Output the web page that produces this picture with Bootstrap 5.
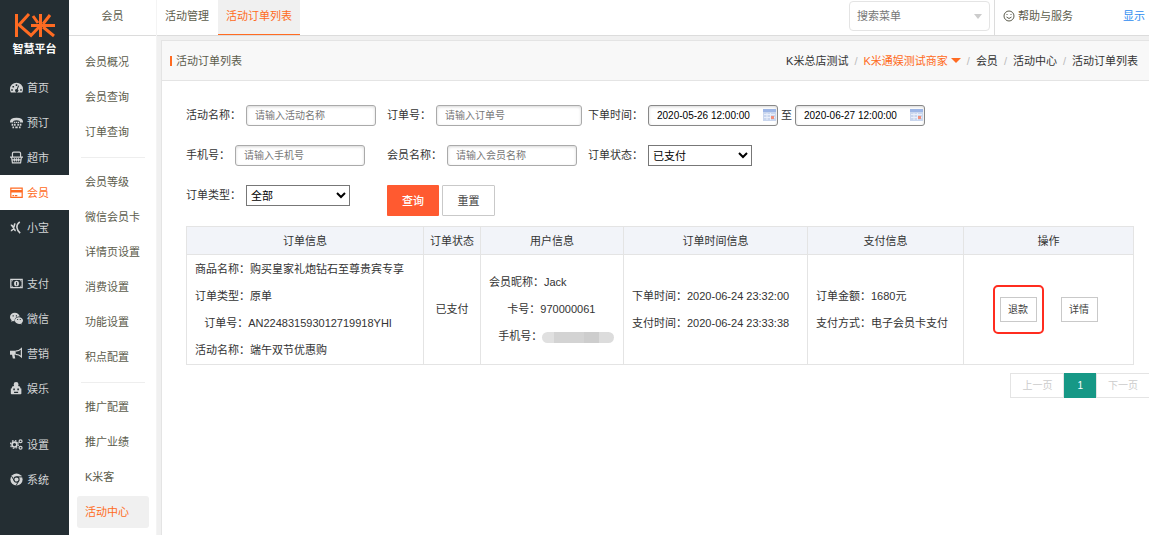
<!DOCTYPE html>
<html lang="zh-CN">
<head>
<meta charset="utf-8">
<meta name="viewport" content="width=device-width, initial-scale=1">
<title>活动订单列表</title>
<link href="https://cdn.jsdelivr.net/npm/bootstrap@5.3.0/dist/css/bootstrap.min.css" rel="stylesheet">
<style>
  :root { --brand: #ff6b22; --ink: #333; --olive: #5c5c4c; --line: #e4e4e4; }
  body { font: 11px/16px "Liberation Sans", "Noto Sans CJK SC", sans-serif; color: var(--ink); background: #f0f0f0; }
  a { text-decoration: none; color: inherit; }
  .shell { height: 100vh; overflow: hidden; }

  /* primary navigation */
  .rail { width: 69px; background: #242e33; color: #d3d5d6; }
  .brand { height: 70px; padding-top: 12px; gap: 3px; }
  .brand-name { font-weight: 700; font-size: 11px; line-height: 16px; color: #fff; }
  .rail a { height: 35px; padding-left: 10px; gap: 4px; }
  .rail a svg { width: 13px; height: 13px; flex: none; }
  .rail a.active { background: #fff; color: var(--brand); }
  .rail .gap-top { margin-top: 21px; }

  /* secondary navigation */
  .submenu { width: 88px; background: #fff; color: var(--olive); border-right: 1px solid #f4f4f4; }
  .bar { height: 36px; border-bottom: 1px solid #dcdcdc; background: #fff; }
  .bar-title { line-height: 32px; }
  .submenu ul { margin: 10px 7px 0 8px; }
  .submenu li a { display: block; height: 32px; line-height: 32px; margin-bottom: 3px; padding-left: 8px; border-radius: 3px; white-space: nowrap; }
  .submenu li a.active { background: #f0f0f0; color: var(--brand); }
  .submenu li.rule { border-top: 1px solid #eee; margin: 9px 4px 8px; }

  /* top bar */
  .tabs a { height: 35px; line-height: 32px; padding: 0 8px; color: var(--olive); }
  .tabs a + a { margin-left: 1px; }
  .tabs a.active { background: #f0f0f0; color: var(--brand); border-bottom: 1px solid var(--brand); }
  .menu-search { width: 141px; height: 30px; border: 1px solid #e4e4e4; border-radius: 4px; margin: 1px 4px 0 0; padding: 0 7px; }
  .menu-search input { width: 100%; border: 0; outline: 0; padding: 0; font-size: 11px; background: none; }
  .menu-search input::placeholder { color: #777; }
  .menu-search .caret { color: #ccc; }
  .caret { width: 0; height: 0; border: 4px solid transparent; border-bottom: 0; border-top: 5px solid currentColor; flex: none; }
  .help { border-left: 1px solid #dcdcdc; padding-left: 8px; height: 35px; padding-bottom: 3px; color: var(--olive); gap: 3px; }
  .show-link { color: #2d8cf0; margin: 0 5px 3px 50px; }

  /* panel */
  .panel { margin: 4px 0 0 4px; border: 1px solid var(--line); border-width: 1px 0 0 1px; background: #fff; }
  .panel-head { height: 40px; background: #f8f8f8; border-bottom: 1px solid var(--line); padding: 0 12px 0 8px; }
  .panel-head h1 { font-size: 11px; font-weight: 400; color: var(--olive); border-left: 2px solid var(--brand); padding-left: 4px; line-height: 10px; margin: 0; }
  .crumbs { gap: 6px; }
  .crumbs i { color: #bbb; font-style: normal; }
  .crumbs .current { color: var(--brand); gap: 3px; }
  .crumbs .caret { border-left-width: 5px; border-right-width: 5px; }
  .panel-body { padding: 24px 16px 0 24px; }

  /* filters */
  .filters { display: grid; grid-template-columns: 201px 201px 1fr; row-gap: 19px; }
  .field { display: flex; gap: 5px; height: 21px; }
  .field label { line-height: 21px; white-space: nowrap; }
  .field input, .field select { width: 130px; height: 21px; font-size: 10px; color: #000; background: #fff; }
  .field input { padding: 0 8px; border: 1px solid #aaa; border-radius: 3px; box-shadow: inset 0 1px 3px rgba(0,0,0,.16); }
  .field input::placeholder { color: #777; }
  .field .order-no { width: 146px; }
  .field select { width: 104px; font-size: 11px; border: 1px solid #777; border-radius: 0; }
  .range { display: flex; gap: 3px; }
  .date-box { position: relative; display: flex; }
  .date-box input { border-color: #888; }
  .date-box svg { position: absolute; right: 2px; top: 4px; }
  .acts { gap: 3px; }
  .act { height: 31px; width: 53px; border-radius: 1px; font-size: 11px; line-height: 16px; padding: 0; }
  .act-go, .act-go:hover { background: #ff5a30; color: #fff; font-weight: 500; width: 52px; }
  .act-reset { border: 1px solid #c9c9c9; background: #fff; color: #444; }

  /* orders */
  .orders { table-layout: fixed; width: 100%; margin-top: 10px; }
  .orders th, .orders td { border: 1px solid var(--line); }
  .orders th { height: 28px; background: #f2f4f9; font-weight: 400; text-align: center; }
  .orders td { padding: 0 8px; white-space: nowrap; line-height: 27px; height: 110px; }
  .mini { width: 37px; height: 25px; padding: 0; font-size: 10px; border: 1px solid #c9c9c9; border-radius: 0; background: #fff; color: #444; }
  .flagged { position: relative; line-height: 0; }
  .flagged::after { content: ""; position: absolute; inset: -12px -7px; border: 2px solid #ff2c1f; border-radius: 5px; pointer-events: none; }
  .masked { display: inline-block; width: 72px; height: 11px; border-radius: 6px; vertical-align: middle; background: linear-gradient(90deg, #e0e0e0 0 17%, #d3d3d3 17% 58%, #cdcdcd 58% 79%, #dcdcdc 79%); }

  .pager { margin: 8px -16px 0 0; font-size: 10px; }
  .pager a, .pager span { height: 25px; line-height: 23px; border: 1px solid var(--line); padding: 0 11px; color: #ccc; }
  .pager a { background: #169886; border-color: #169886; color: #fff; padding: 0 12px; }
</style>
</head>
<body>
<div class="shell d-flex">

  <nav class="rail flex-shrink-0">
    <div class="brand d-flex flex-column align-items-center">
      <svg width="42" height="26" viewBox="0 0 42 26" fill="none" stroke="#ff6b22" stroke-width="3" aria-label="K米">
        <path d="M2.500 2v23M15 2L5 13l12 10.500L26 14M17 13.500h24M26.500 2v23M19 4l5 7M36 3l-7 9M29 15l11 9"/>
      </svg>
      <div class="brand-name">智慧平台</div>
    </div>
    <a href="#" class="d-flex align-items-center"><svg viewBox="0 0 16 16" fill="currentColor"><path fill-rule="evenodd" d="M8 2a8 8 0 0 0-8 8q0 2 1 4h14q1-2 1-4a8 8 0 0 0-8-8zM7 4h2v2H7zM3 6h2v2H3zM1.500 10h2v2h-2zM12.500 10h2v2h-2zM10 5.500l1.200.4-1.700 4.300a2 2 0 1 1-1.200-.4z"/></svg>首页</a>
    <a href="#" class="d-flex align-items-center"><svg viewBox="0 0 16 16" fill="currentColor"><path d="M0 7q0-5 8-5t8 5v1h-4V6Q8 4.500 4 6v2H0zM5 7h1.500v1.500H5zM7.300 7h1.500v1.500H7.300zM9.600 7h1.500v1.500H9.600zM2 9.500h2V12H2zM5 9.500h2V12H5zM9 9.500h2V12H9zM12 9.500h2V12h-2zM3 13h2v2H3zM6.500 13h3v2h-3zM11 13h2v2h-2z"/></svg>预订</a>
    <a href="#" class="d-flex align-items-center"><svg viewBox="0 0 16 16" fill="none" stroke="currentColor" stroke-width="1.500"><path d="M3 7V3q0-1.500 1.500-1.500h7Q13 1.500 13 3v4M0 7.500h16M2 8l1 6.500h10L14 8M5.500 9v4M8 9v4M10.500 9v4M3 11h10"/></svg>超市</a>
    <a href="#" class="active d-flex align-items-center"><svg viewBox="0 0 16 16"><path fill="none" stroke="currentColor" stroke-width="1.500" d="M1 2.500h14v11.500H1z"/><path fill="currentColor" d="M1 5h14v3H1zM3 11h2v1.500H3zM6 11h3v1.500H6z"/></svg>会员</a>
    <a href="#" class="d-flex align-items-center"><svg viewBox="0 0 16 16" fill="none" stroke="currentColor" stroke-width="2"><path d="M1 5q2 0 3 3t3 4M1 12Q4 12 6 3M12 1Q8 4 8.500 8t4 7"/></svg>小宝</a>
    <a href="#" class="gap-top d-flex align-items-center"><svg viewBox="0 0 16 16"><path fill="none" stroke="currentColor" stroke-width="1.500" d="M1 3h14v10H1z"/><path fill="currentColor" fill-rule="evenodd" d="M8 4.500a3 3.500 0 1 1 0 7 3 3.500 0 0 1 0-7zm-.5 1.500v4h1.200V6zM2 4h2L2 6zM14 4h-2l2 2zM2 12h2l-2-2zM14 12h-2l2-2z"/></svg>支付</a>
    <a href="#" class="d-flex align-items-center"><svg viewBox="0 0 16 16" fill="currentColor"><path fill-rule="evenodd" d="M6 1C2.500 1 0 3.200 0 6.200 0 7.900.8 9.200 2 10.200L1.500 12l2.200-1q1 .4 2 .4C5.200 8 8 5.500 12 5.500 11.300 2.800 8.800 1 6 1zM3.200 4h1.400v1.400H3.200zM7.200 4h1.400v1.400H7.200z"/><path fill-rule="evenodd" d="M11 6.500c-3 0-5 1.800-5 4.100s2 4.100 5 4.100q1 0 1.700-.3l1.800 1-.5-1.500c1.200-.8 2-2 2-3.300 0-2.300-2.200-4.100-5-4.100zM8.800 8.500H10v1.200H8.800zM12 8.500h1.200v1.200H12z"/></svg>微信</a>
    <a href="#" class="d-flex align-items-center"><svg viewBox="0 0 16 16"><path fill="currentColor" d="M0 4.500h7v5H5.500l1 4.500h-3l-1-4.500H0z"/><path fill="none" stroke="currentColor" stroke-width="1.500" d="M7 5q4 0 7-3v10q-3-3-7-3"/></svg>营销</a>
    <a href="#" class="d-flex align-items-center"><svg viewBox="0 0 16 16" fill="currentColor"><path fill-rule="evenodd" d="M4.500 3q0-3 3-3t3 3L10 5q3 0 3 3h1v6q0 1-1 1H2q-1 0-1-1V8h1q0-3 3-3zM4 8v2h2V8zM9 8v2h2V8zM5 12v1.500h5V12z"/></svg>娱乐</a>
    <a href="#" class="gap-top d-flex align-items-center"><svg viewBox="0 0 16 16" fill="none" stroke="currentColor"><circle cx="5.500" cy="8" r="3" stroke-width="2"/><circle cx="5.500" cy="8" r="4.800" stroke-width="1.500" stroke-dasharray="2 1.770"/><circle cx="13" cy="4" r="1.800" stroke-width="1.500"/><circle cx="13" cy="12" r="1.800" stroke-width="1.500"/></svg>设置</a>
    <a href="#" class="d-flex align-items-center"><svg viewBox="0 0 16 16"><circle cx="8" cy="8" r="7.500" fill="currentColor"/><circle cx="8" cy="8" r="3.200" fill="none" stroke="#242e33" stroke-width="1.300"/><path fill="none" stroke="#242e33" stroke-width="1.200" d="M8 4.800h7M5.200 9.500L2 4M10.800 9.500L7.500 15.500"/></svg>系统</a>
  </nav>

  <nav class="submenu flex-shrink-0">
    <div class="bar bar-title text-center">会员</div>
    <ul class="list-unstyled">
      <li><a href="#">会员概况</a></li>
      <li><a href="#">会员查询</a></li>
      <li><a href="#">订单查询</a></li>
      <li class="rule"></li>
      <li><a href="#">会员等级</a></li>
      <li><a href="#">微信会员卡</a></li>
      <li><a href="#">详情页设置</a></li>
      <li><a href="#">消费设置</a></li>
      <li><a href="#">功能设置</a></li>
      <li><a href="#">积点配置</a></li>
      <li class="rule"></li>
      <li><a href="#">推广配置</a></li>
      <li><a href="#">推广业绩</a></li>
      <li><a href="#">K米客</a></li>
      <li><a href="#" class="active">活动中心</a></li>
    </ul>
  </nav>

  <div class="flex-grow-1 d-flex flex-column">
    <header class="bar d-flex flex-shrink-0">
      <nav class="tabs d-flex me-auto">
        <a href="#">活动管理</a>
        <a href="#" class="active">活动订单列表</a>
      </nav>
      <div class="menu-search d-flex align-items-center">
        <input type="text" placeholder="搜索菜单" aria-label="搜索菜单">
        <span class="caret"></span>
      </div>
      <a href="#" class="help d-flex align-items-center">
        <svg width="12" height="12" viewBox="0 0 12 12" fill="none" stroke="currentColor"><circle cx="6" cy="6" r="5"/><path d="M3.500 7Q6 10 8.500 7M4 4v1M8 4v1"/></svg>
        帮助与服务
      </a>
      <a href="#" class="show-link align-self-center">显示</a>
    </header>

    <main class="panel flex-grow-1">
      <div class="panel-head d-flex align-items-center justify-content-between">
        <h1>活动订单列表</h1>
        <nav class="crumbs d-flex">
          <a href="#">K米总店测试</a><i>/</i>
          <a href="#" class="current d-flex align-items-center">K米通娱测试商家<span class="caret"></span></a><i>/</i>
          <a href="#">会员</a><i>/</i>
          <a href="#">活动中心</a><i>/</i>
          <span>活动订单列表</span>
        </nav>
      </div>

      <div class="panel-body">
        <form class="filters">
          <div class="field"><label for="f-name">活动名称：</label><input id="f-name" type="text" placeholder="请输入活动名称"></div>
          <div class="field"><label for="f-no">订单号：</label><input id="f-no" class="order-no" type="text" placeholder="请输入订单号"></div>
          <div class="field">
            <label for="f-from">下单时间：</label>
            <div class="range">
              <div class="date-box"><input id="f-from" type="text" value="2020-05-26 12:00:00"><svg width="13" height="12" viewBox="0 0 13 12"><path fill="#c9d6ee" d="M0 0h13v12H0z"/><path fill="#9db6e6" d="M0 0h13v3H0z"/><path stroke="#e9effa" d="M1 5.500h11M1 8.500h11M4 4v7M7.500 4v7"/><path fill="#f0907c" d="M8 7h3v3H8z"/></svg></div>
              <label for="f-to">至</label>
              <div class="date-box"><input id="f-to" type="text" value="2020-06-27 12:00:00"><svg width="13" height="12" viewBox="0 0 13 12"><path fill="#c9d6ee" d="M0 0h13v12H0z"/><path fill="#9db6e6" d="M0 0h13v3H0z"/><path stroke="#e9effa" d="M1 5.500h11M1 8.500h11M4 4v7M7.500 4v7"/><path fill="#f0907c" d="M8 7h3v3H8z"/></svg></div>
            </div>
          </div>
          <div class="field"><label for="f-tel">手机号：</label><input id="f-tel" type="text" placeholder="请输入手机号"></div>
          <div class="field"><label for="f-member">会员名称：</label><input id="f-member" type="text" placeholder="请输入会员名称"></div>
          <div class="field"><label for="f-state">订单状态：</label><select id="f-state"><option>已支付</option></select></div>
          <div class="field"><label for="f-type">订单类型：</label><select id="f-type"><option>全部</option></select></div>
          <div class="acts d-flex align-items-start">
            <button type="button" class="btn act act-go">查询</button>
            <button type="reset" class="btn act act-reset">重置</button>
          </div>
        </form>

        <table class="orders">
          <colgroup><col style="width:237px"><col style="width:57px"><col style="width:143px"><col style="width:184px"><col style="width:156px"><col style="width:170px"></colgroup>
          <thead><tr><th>订单信息</th><th>订单状态</th><th>用户信息</th><th>订单时间信息</th><th>支付信息</th><th>操作</th></tr></thead>
          <tbody>
            <tr>
              <td>商品名称：购买皇家礼炮钻石至尊贵宾专享<br>订单类型：原单<br>&nbsp;&nbsp;&nbsp;订单号：AN224831593012719918YHI<br>活动名称：端午双节优惠购</td>
              <td class="text-center">已支付</td>
              <td>会员昵称：Jack<br>&nbsp;&nbsp;&nbsp;&nbsp;&nbsp;&nbsp;卡号：970000061<br>&nbsp;&nbsp;&nbsp;手机号：<span class="masked"></span></td>
              <td>下单时间：2020-06-24 23:32:00<br>支付时间：2020-06-24 23:33:38</td>
              <td>订单金额：1680元<br>支付方式：电子会员卡支付</td>
              <td>
                <div class="d-flex justify-content-center gap-4">
                  <span class="flagged"><button type="button" class="btn mini">退款</button></span>
                  <button type="button" class="btn mini">详情</button>
                </div>
              </td>
            </tr>
          </tbody>
        </table>

        <nav class="pager d-flex justify-content-end" aria-label="分页">
          <span>上一页</span><a href="#">1</a><span>下一页</span>
        </nav>
      </div>
    </main>
  </div>
</div>
<script src="https://cdn.jsdelivr.net/npm/bootstrap@5.3.0/dist/js/bootstrap.bundle.min.js"></script>
</body>
</html>
